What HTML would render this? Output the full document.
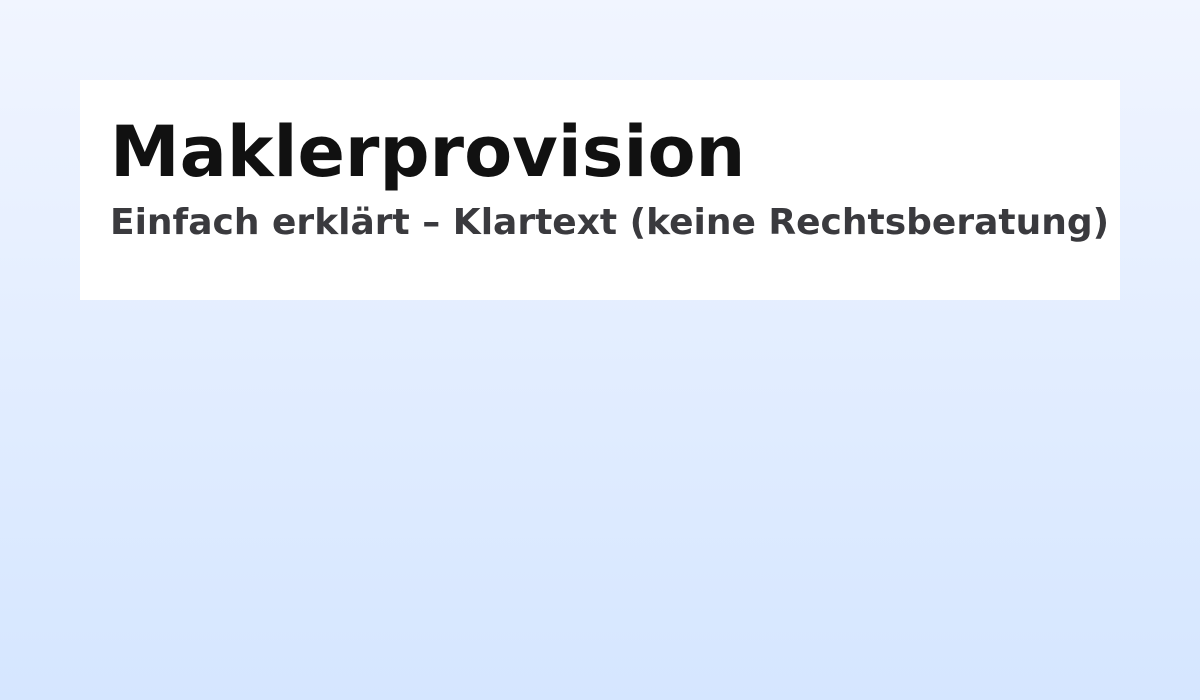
<!DOCTYPE html>
<html><head><meta charset="utf-8"><style>
html,body{margin:0;padding:0;}
body{width:1200px;height:700px;background:linear-gradient(180deg,#f1f5ff 0%,#d5e6ff 100%);position:relative;overflow:hidden;font-family:"DejaVu Sans","Liberation Sans",sans-serif;}
.card{position:absolute;left:80px;top:80px;width:1040px;height:220px;background:rgba(255,255,255,0.97);}
h1{position:absolute;left:110px;top:117px;margin:0;font-size:70px;line-height:70px;font-weight:bold;color:#111;white-space:nowrap;}
p{position:absolute;left:110px;top:205px;margin:0;font-size:36px;line-height:36px;font-weight:bold;color:#3a3a3e;white-space:nowrap;}
</style></head><body>
<div class="card"></div>
<h1>Maklerprovision</h1>
<p>Einfach erklärt – Klartext (keine Rechtsberatung)</p>
</body></html>
